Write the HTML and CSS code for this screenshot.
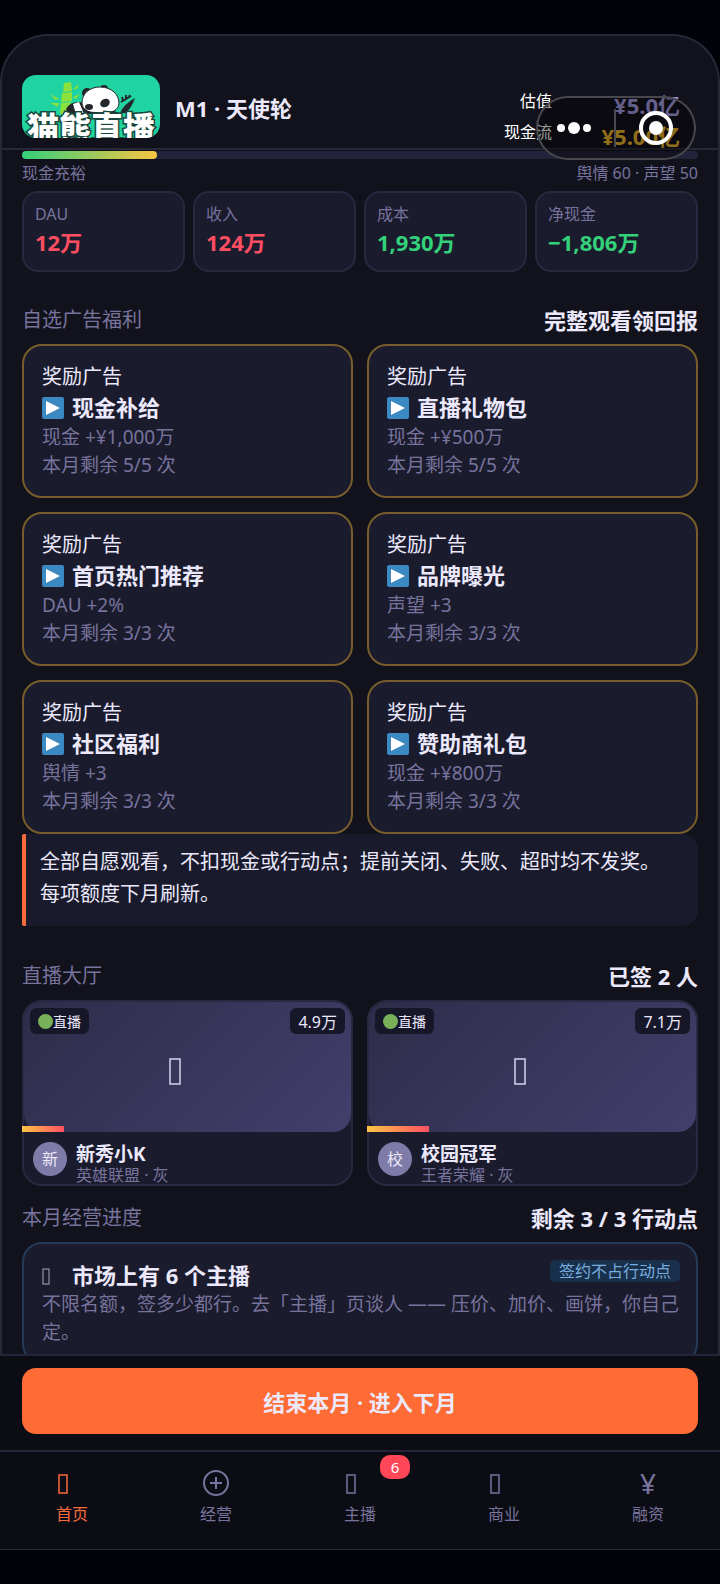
FILE: index.html
```html
<!doctype html>
<html lang="zh-CN">
<head>
  <meta charset="UTF-8">
  <meta name="viewport" content="width=device-width, initial-scale=1.0">
  <title>猫熊直播</title>
  <link rel="stylesheet" href="styles.css">
</head>
<body>
  <div class="phone">
    <header class="topbar">
      <svg class="logo" viewBox="0 0 138 63" role="img" aria-label="猫熊直播">
        <rect width="138" height="63" fill="#1fd4a0"/>
        <!-- bamboo -->
        <g fill="#8be03c">
          <path d="M42 8l7-1 1 9-9 1zM40 18l10-1v9l-11 1zM39 28l10-1-1 12h-10z"/>
          <path d="M51 14l6-5-2 5zM51 22l7-3-4 5zM37 24l-8-5 4 6zM37 28l-9 0 8 4z"/>
        </g>
        <!-- panda -->
        <path d="M44 34q4-8 15-7l8 12H46z" fill="#23262a"/>
        <path d="M51 29l6-2 5 12h-8z" fill="#fff"/>
        <circle cx="65" cy="18" r="5" fill="#23262a"/>
        <circle cx="82" cy="14" r="4" fill="#23262a"/>
        <path d="M60 28c0-10 8-16 18-16 12 0 19 8 19 16 0 7-8 11-18 11-11 0-19-4-19-11z" fill="#fff" stroke="#23262a"/>
        <ellipse cx="83" cy="28" rx="5" ry="4" fill="#23262a" transform="rotate(-30 83 28)"/>
        <ellipse cx="67" cy="32" rx="4" ry="3" fill="#23262a"/>
        <path d="M62 35q12 4 30 1l8 3H62zM98 38q4-9 15-15-3 9-9 15z" fill="#23262a"/>
        <path d="M99 27l10-6M101 25l-1-3M104 24v-4M107 22l1-2" stroke="#23262a" stroke-width="2"/>
        <text class="logo-text" x="69" y="65" text-anchor="middle">猫熊直播</text>
      </svg>
      <h1 class="stage">M1 · 天使轮</h1>
      <dl class="funds">
        <dt>估值</dt><dd class="valuation">¥5.0亿</dd>
        <dt>现金流</dt><dd class="cash">¥5.00亿</dd>
      </dl>
      <button class="capsule" type="button" aria-label="更多">
        <svg viewBox="0 0 160 64">
          <g fill="#fff">
            <circle cx="25" cy="32" r="4"/>
            <circle cx="38" cy="32" r="6"/>
            <circle cx="51" cy="32" r="4"/>
            <circle cx="120" cy="32" r="7"/>
          </g>
          <path d="M79 13v38" stroke="#4a4a50" stroke-width="2"/>
          <circle cx="120" cy="32" r="15" fill="none" stroke="#fff" stroke-width="4"/>
        </svg>
      </button>
    </header>

    <main class="content">
      <div class="runway"><div class="runway-fill" style="width:20%"></div></div>
      <div class="runway-info"><span>现金充裕</span><span>舆情 60 · 声望 50</span></div>

      <div class="stats">
        <div class="stat down"><span>DAU</span><strong>12万</strong></div>
        <div class="stat down"><span>收入</span><strong>124万</strong></div>
        <div class="stat up"><span>成本</span><strong>1,930万</strong></div>
        <div class="stat up"><span>净现金</span><strong>−1,806万</strong></div>
      </div>

      <div class="section-head"><h2>自选广告福利</h2><strong>完整观看领回报</strong></div>
      <div class="ads">
        <button class="ad" type="button">
          <span class="ad-kind">奖励广告</span>
          <span class="ad-title"><i class="play"></i>现金补给</span>
          <span class="muted">现金 +¥1,000万</span>
          <span class="muted">本月剩余 5/5 次</span>
        </button>
        <button class="ad" type="button">
          <span class="ad-kind">奖励广告</span>
          <span class="ad-title"><i class="play"></i>直播礼物包</span>
          <span class="muted">现金 +¥500万</span>
          <span class="muted">本月剩余 5/5 次</span>
        </button>
        <button class="ad" type="button">
          <span class="ad-kind">奖励广告</span>
          <span class="ad-title"><i class="play"></i>首页热门推荐</span>
          <span class="muted">DAU +2%</span>
          <span class="muted">本月剩余 3/3 次</span>
        </button>
        <button class="ad" type="button">
          <span class="ad-kind">奖励广告</span>
          <span class="ad-title"><i class="play"></i>品牌曝光</span>
          <span class="muted">声望 +3</span>
          <span class="muted">本月剩余 3/3 次</span>
        </button>
        <button class="ad" type="button">
          <span class="ad-kind">奖励广告</span>
          <span class="ad-title"><i class="play"></i>社区福利</span>
          <span class="muted">舆情 +3</span>
          <span class="muted">本月剩余 3/3 次</span>
        </button>
        <button class="ad" type="button">
          <span class="ad-kind">奖励广告</span>
          <span class="ad-title"><i class="play"></i>赞助商礼包</span>
          <span class="muted">现金 +¥800万</span>
          <span class="muted">本月剩余 3/3 次</span>
        </button>
      </div>
      <p class="note">全部自愿观看，不扣现金或行动点；提前关闭、失败、超时均不发奖。<br>每项额度下月刷新。</p>

      <div class="section-head"><h2>直播大厅</h2><strong>已签 2 人</strong></div>
      <div class="lives">
        <article class="live">
          <div class="thumb">
            <span class="badge on-air"><i class="dot"></i>直播</span>
            <span class="badge viewers">4.9万</span>
            <svg class="thumb-icon" viewBox="0 0 38 38"><rect x="1" y="6" width="10" height="25"/></svg>
            <div class="heat" style="width:42px"></div>
          </div>
          <div class="host">
            <span class="avatar">新</span>
            <div><h3>新秀小K</h3><p>英雄联盟 · 灰</p></div>
          </div>
        </article>
        <article class="live">
          <div class="thumb">
            <span class="badge on-air"><i class="dot"></i>直播</span>
            <span class="badge viewers">7.1万</span>
            <svg class="thumb-icon" viewBox="0 0 38 38"><rect x="1" y="6" width="10" height="25"/></svg>
            <div class="heat" style="width:62px"></div>
          </div>
          <div class="host">
            <span class="avatar">校</span>
            <div><h3>校园冠军</h3><p>王者荣耀 · 灰</p></div>
          </div>
        </article>
      </div>

      <div class="section-head tight"><h2>本月经营进度</h2><strong>剩余 3 / 3 行动点</strong></div>
      <div class="market">
        <div class="market-head">
          <svg class="market-icon" viewBox="0 0 22 22"><rect x="1" y="4" width="6" height="15"/></svg>
          <h3>市场上有 6 个主播</h3>
          <span class="tag">签约不占行动点</span>
        </div>
        <p class="muted">不限名额，签多少都行。去「主播」页谈人 —— 压价、加价、画饼，你自己定。</p>
      </div>
    </main>
  </div>

  <footer class="bottom">
    <div class="action"><button class="next-month" type="button">结束本月 · 进入下月</button></div>
    <nav class="tabs">
      <a class="tab active" href="#home">
        <svg viewBox="0 0 28 28"><rect x="1" y="6" width="8" height="18"/></svg>首页
      </a>
      <a class="tab" href="#ops">
        <svg viewBox="0 0 28 28"><g stroke-width="2"><circle cx="14" cy="14" r="12"/><path d="M14 8v12M8 14h12"/></g></svg>经营
      </a>
      <a class="tab" href="#hosts">
        <svg viewBox="0 0 28 28"><rect x="1" y="6" width="8" height="18"/></svg>主播
        <span class="count">6</span>
      </a>
      <a class="tab" href="#business">
        <svg viewBox="0 0 28 28"><rect x="1" y="6" width="8" height="18"/></svg>商业
      </a>
      <a class="tab" href="#funding">
        <span class="yen">¥</span>融资
      </a>
    </nav>
  </footer>
</body>
</html>
```
FILE: styles.css
```css
* {
  box-sizing: border-box;
  margin: 0;
  padding: 0;
}
body {
  display: flex;
  flex-direction: column;
  height: 100vh;
  padding: 34px 0;
  overflow: hidden;
  background: #020308;
  color: #ebe9fb;
  font-family: "Noto Sans", "Noto Sans CJK SC", sans-serif;
  font-size: 16px;
}
button {
  font-family: inherit;
  color: inherit;
  cursor: pointer;
}
.phone {
  flex: 1;
  min-height: 0;
  display: flex;
  flex-direction: column;
  border: 2px solid #292838;
  border-bottom: none;
  border-radius: 48px 48px 0 0;
  background: #12121c;
}

/* header */
.topbar {
  position: relative;
  display: flex;
  flex: none;
  align-items: flex-start;
  padding: 39px 38px 0 20px;
  border-bottom: 2px solid #292838;
}
.logo {
  width: 138px;
  height: 63px;
  border-radius: 14px;
}
.logo-text {
  font-size: 32px;
  font-weight: 900;
  fill: #fff;
  stroke: #17463c;
  stroke-width: 3px;
  paint-order: stroke;
}
.stage {
  margin-left: 15px;
  font-size: 22px;
  line-height: 66px;
}
.funds {
  display: grid;
  grid-template-columns: auto 128px;
  row-gap: 7px;
  margin-left: auto;
  padding-top: 18px;
  text-align: right;
}
.funds dt {
  line-height: 16px;
  color: #fff;
}
.funds dd {
  font-size: 22px;
  font-weight: bold;
  line-height: 24px;
}
.valuation {
  color: #a99eea;
}
.cash {
  color: #f0b92c;
}
.capsule {
  position: absolute;
  top: 60px;
  right: 22px;
  width: 160px;
  height: 64px;
  border: none;
  border-radius: 32px;
  background: rgba(0, 0, 0, 0.4);
  box-shadow: inset 0 0 0 2px #48484e;
}
.capsule svg {
  display: block;
}

.content {
  flex: 1;
  min-height: 0;
  padding: 1px 20px 0;
  overflow: hidden;
}
.runway {
  height: 8px;
  border-radius: 4px;
  background: #22223a;
}
.runway-fill {
  height: 8px;
  border-radius: 4px;
  background: linear-gradient(90deg, #35d07a, #f8c542);
}
.runway-info {
  display: flex;
  justify-content: space-between;
  margin: 2px 0 6px;
  line-height: 24px;
  color: #77739c;
}

.stats {
  display: grid;
  grid-template-columns: repeat(4, 1fr);
  gap: 8px;
}
.stat {
  padding: 10px 11px;
  border: 2px solid #292840;
  border-radius: 16px;
  background: #1b1b2e;
}
.stat span {
  display: block;
  line-height: 22px;
  color: #77739c;
}
.stat strong {
  display: block;
  font-size: 22px;
  line-height: 35px;
}
.down strong {
  color: #ff4d61;
}
.up strong {
  color: #33d17a;
}

.section-head {
  display: flex;
  justify-content: space-between;
  align-items: center;
  margin: 34px 0 10px;
  line-height: 28px;
}
.section-head.tight {
  margin-top: 18px;
}
.section-head h2 {
  font-size: 20px;
  font-weight: normal;
  color: #77739c;
}
.section-head strong {
  font-size: 22px;
}

/* reward ads */
.ads {
  display: grid;
  grid-template-columns: repeat(2, 1fr);
  gap: 14px;
}
.ad {
  padding: 16px 18px 17px;
  border: 2px solid #775d2b;
  border-radius: 20px;
  background: #1b1b2e;
  text-align: left;
}
.ad span {
  display: block;
}
.ad .ad-kind {
  font-size: 20px;
  line-height: 30px;
}
.ad .ad-title {
  display: flex;
  align-items: center;
  gap: 8px;
  font-size: 22px;
  font-weight: bold;
  line-height: 31px;
}
.muted {
  font-size: 19px;
  line-height: 28px;
  color: #77739c;
}
.play {
  display: flex;
  align-items: center;
  justify-content: center;
  width: 22px;
  height: 22px;
  border-radius: 2px;
  background: #3b88c3;
}
.play::before {
  content: "";
  border-left: 14px solid #fff;
  border-top: 7px solid transparent;
  border-bottom: 7px solid transparent;
}
.note {
  margin-bottom: 36px;
  padding: 12px 14px 16px;
  border-left: 4px solid #f56b3c;
  border-radius: 2px 16px 16px 2px;
  background: #191a2b;
  font-size: 20px;
  line-height: 32px;
}

/* live hall */
.lives {
  display: grid;
  grid-template-columns: repeat(2, 1fr);
  gap: 14px;
}
.live {
  border: 2px solid #292840;
  border-radius: 20px;
  background: #1b1b2e;
}
.thumb {
  position: relative;
  display: flex;
  align-items: center;
  justify-content: center;
  height: 130px;
  padding-top: 10px;
  border-radius: 18px;
  background: linear-gradient(135deg, #2d2d4a, #423f6b);
}
.thumb-icon {
  width: 38px;
  fill: none;
  stroke: #d6d4ee;
  stroke-width: 1.5;
}
.badge {
  position: absolute;
  top: 6px;
  display: flex;
  align-items: center;
  height: 26px;
  padding: 0 8px;
  border-radius: 6px;
  background: #17172a;
}
.on-air {
  left: 6px;
  font-size: 14px;
}
.viewers {
  right: 6px;
}
.dot {
  width: 15px;
  height: 15px;
  border-radius: 50%;
  background: #78b159;
}
.heat {
  position: absolute;
  left: -2px;
  bottom: 0;
  height: 6px;
  background: linear-gradient(90deg, #fdc544, #ff4f63);
}
.host {
  display: flex;
  gap: 9px;
  padding: 10px 10px 0 9px;
}
.avatar {
  flex: none;
  width: 34px;
  height: 34px;
  border-radius: 50%;
  background: #7f7ba8;
  line-height: 34px;
  text-align: center;
}
.host h3 {
  font-size: 19px;
  line-height: 24px;
}
.host p {
  line-height: 18px;
  color: #77739c;
}

.market {
  padding: 16px 16px 16px 18px;
  border: 2px solid #243a58;
  border-radius: 20px;
  background: #1b1b2e;
}
.market-head {
  display: flex;
  align-items: flex-start;
  gap: 8px;
}
.market-head h3 {
  font-size: 22px;
  line-height: 30px;
}
.market-icon {
  width: 22px;
  margin-top: 5px;
  fill: none;
  stroke: #a9a7bd;
}
.tag {
  margin-left: auto;
  padding: 0 9px;
  border-radius: 5px;
  background: #18304c;
  line-height: 22px;
  color: #78addf;
}

/* bottom bar */
.bottom {
  flex: none;
  border-top: 2px solid #25243a;
  border-bottom: 1px solid #25243a;
  background: #0c0c15;
}
.action {
  padding: 12px 22px 16px;
}
.next-month {
  display: block;
  width: 100%;
  height: 66px;
  border: none;
  border-radius: 14px;
  background: #ff6b35;
  font-size: 22px;
  font-weight: bold;
}
.tabs {
  display: grid;
  grid-template-columns: repeat(5, 1fr);
  border-top: 2px solid #25243a;
}
.tab {
  position: relative;
  display: flex;
  flex-direction: column;
  align-items: center;
  gap: 5px;
  padding: 17px 0 23px;
  line-height: 24px;
  color: #77739c;
  text-decoration: none;
}
.tab.active {
  color: #f56b3c;
}
.tab svg {
  width: 28px;
  height: 28px;
  fill: none;
  stroke: currentColor;
  stroke-width: 1.5;
}
.yen {
  font-size: 28px;
  line-height: 28px;
}
.count {
  position: absolute;
  top: 3px;
  left: calc(50% + 20px);
  width: 30px;
  border-radius: 10px;
  background: #ff4757;
  color: #fff;
  font-size: 15px;
  text-align: center;
}
```
